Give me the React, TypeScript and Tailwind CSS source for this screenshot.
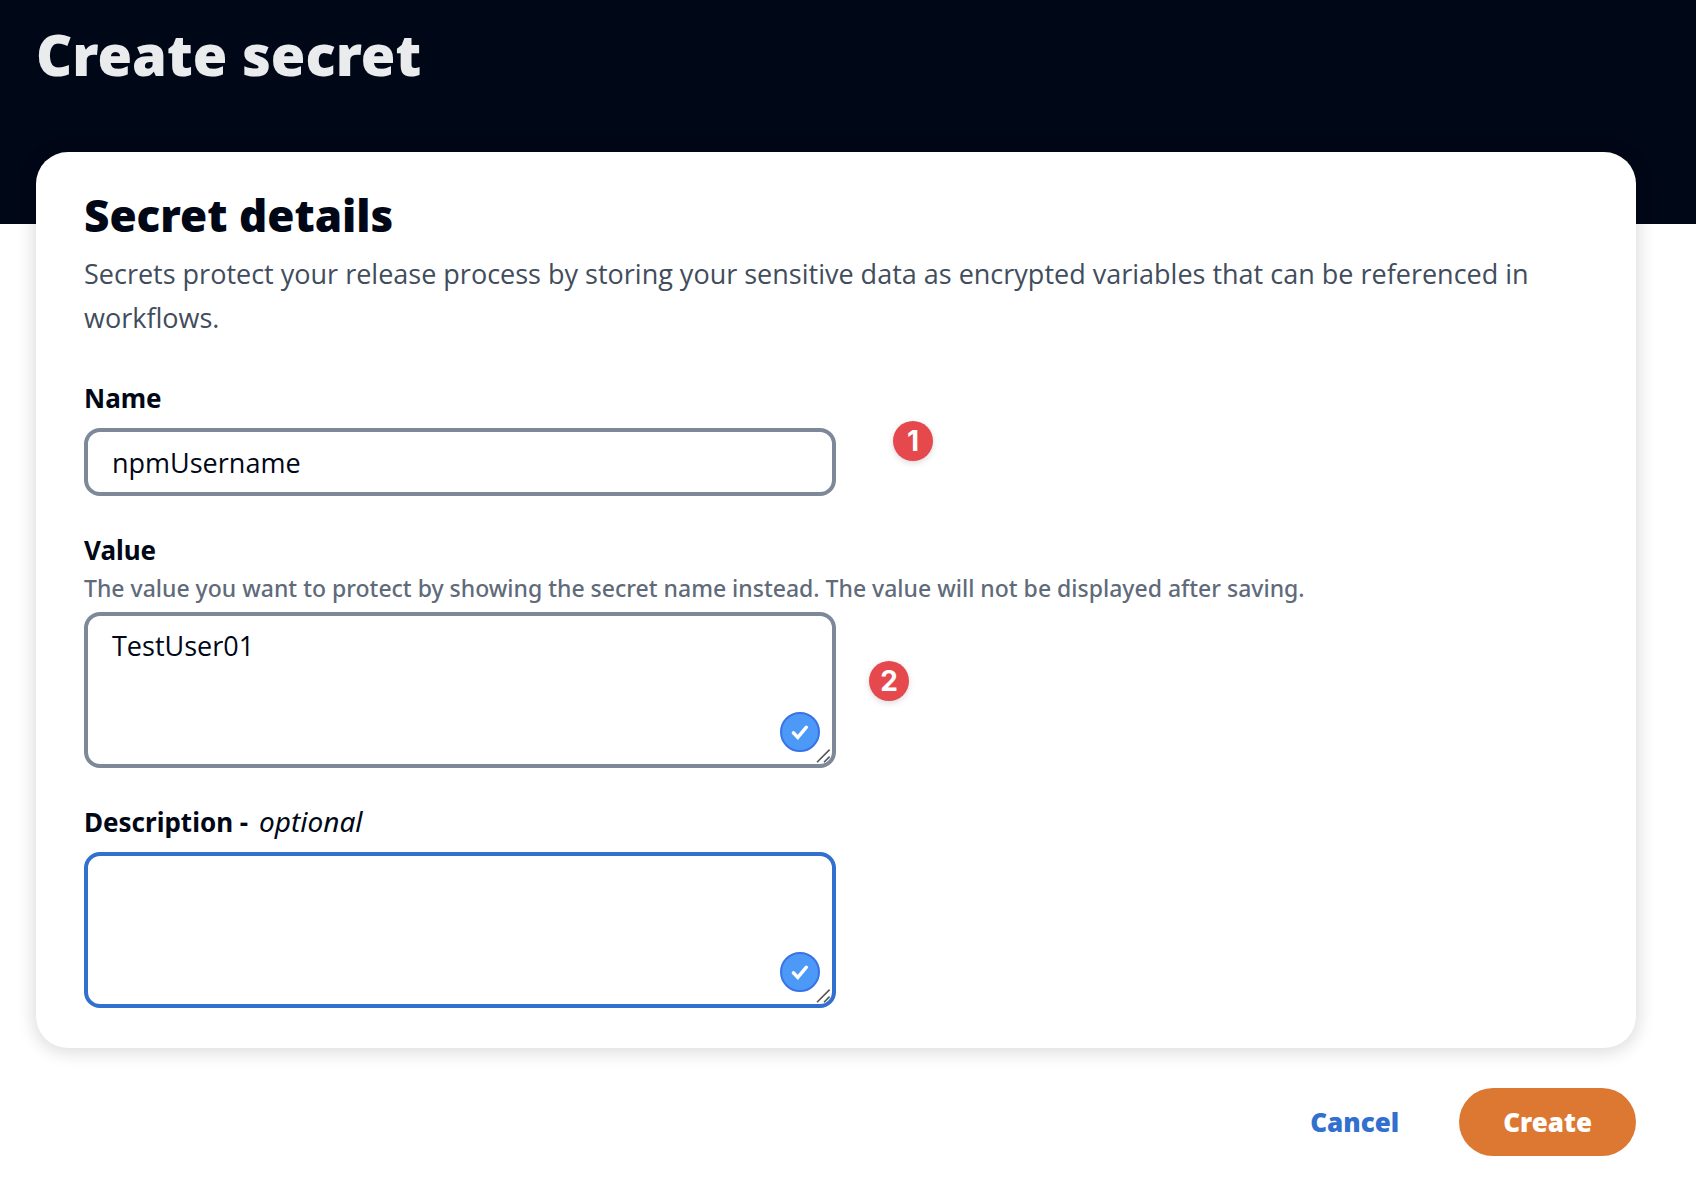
import React, { useState } from "react";

function CheckBubble() {
  return (
    <svg aria-hidden="true" viewBox="0 0 40 40" className="pointer-events-none absolute right-4 bottom-4 size-10">
      <circle cx="20" cy="20" r="19" fill="#4c99f8" stroke="#3873e8" strokeWidth="2" />
      <path d="M13.4 20.8 17.8 25.4 26.4 15.2" fill="none" stroke="#fff" strokeWidth="3.4" strokeLinecap="round" strokeLinejoin="miter" />
    </svg>
  );
}

function ResizeGrip() {
  return (
    <svg aria-hidden="true" viewBox="0 0 16 16" className="pointer-events-none absolute right-1 bottom-1 size-4">
      <path d="M1 14.2 13.6 1.6M8 14.2 13.6 8.6" fill="none" stroke="#555" strokeWidth="1.6" />
    </svg>
  );
}

const badge =
  "absolute flex size-10 items-center justify-center rounded-full bg-[#e5484d] font-['Inter',sans-serif] text-[28px] leading-10 font-bold text-white shadow-[0_2px_6px_rgba(0,0,0,0.15)]";
const label = "block text-[26px] leading-10 font-bold";
const field =
  "block w-full rounded-2xl border-4 bg-white px-6 font-['Open_Sans','Noto_Sans',sans-serif] text-[27px] leading-[44px] outline-none";

export default function App() {
  const [name, setName] = useState("npmUsername");
  const [value, setValue] = useState("TestUser01");
  const [description, setDescription] = useState("");

  return (
    <div className="min-h-screen bg-white font-['Noto_Sans',sans-serif] text-[#000716]">
      <header className="bg-[#000716] px-9 pt-4 pb-[132px]">
        <h1 className="text-[56px] leading-[76px] font-black text-[#e9ebed]">Create secret</h1>
      </header>

      <form className="-mt-[72px] mr-[60px] ml-9 pb-6" onSubmit={(e) => e.preventDefault()}>
        <section className="rounded-[32px] bg-white px-12 pt-9 pb-10 shadow-[0_2px_16px_4px_rgba(0,7,22,0.12)]">
          <h2 className="text-[44px] leading-[54px] font-black">Secret details</h2>
          <p className="mt-[10px] font-['Open_Sans','Noto_Sans',sans-serif] text-[27px] leading-[44px] text-[#414d5c]">
            Secrets protect your release process by storing your sensitive data as encrypted variables that can be
            referenced in workflows.
          </p>

          <div className="mt-[38px] flex flex-col gap-[34px]">
            <div>
              <label htmlFor="name" className={label}>
                Name
              </label>
              <div className="relative mt-[10px] max-w-[752px]">
                <input
                  id="name"
                  type="text"
                  value={name}
                  onChange={(e) => setName(e.target.value)}
                  className={`${field} h-[68px] border-[#7d8998]`}
                />
                <span className={`${badge} -top-[7px] left-[calc(100%+57px)]`}>1</span>
              </div>
            </div>

            <div>
              <label htmlFor="value" className={label}>
                Value
              </label>
              <p id="value-hint" className="mt-[2px] text-[23px] leading-8 font-medium text-[#5f6b7a]">
                The value you want to protect by showing the secret name instead. The value will not be displayed after
                saving.
              </p>
              <div className="relative mt-2 max-w-[752px]">
                <textarea
                  id="value"
                  aria-describedby="value-hint"
                  value={value}
                  onChange={(e) => setValue(e.target.value)}
                  className={`${field} h-[156px] resize-none border-[#7d8998] py-2`}
                />
                <CheckBubble />
                <ResizeGrip />
                <span className={`${badge} top-[49px] left-[calc(100%+33px)]`}>2</span>
              </div>
            </div>

            <div>
              <label htmlFor="description" className={label}>
                Description - <i className="ml-1 text-[28px] leading-8 font-normal">optional</i>
              </label>
              <div className="relative mt-[10px] max-w-[752px]">
                <textarea
                  id="description"
                  value={description}
                  onChange={(e) => setDescription(e.target.value)}
                  className={`${field} h-[156px] resize-none border-[#3170cf] py-2`}
                />
                <CheckBubble />
                <ResizeGrip />
              </div>
            </div>
          </div>
        </section>

        <div className="mt-10 flex items-center justify-end gap-4 text-[26px] leading-10 font-black">
          <button type="button" className="h-[68px] rounded-full px-11 text-[#3170cf]">
            Cancel
          </button>
          <button type="submit" className="h-[68px] rounded-full bg-[#dd7832] px-11 text-white">
            Create
          </button>
        </div>
      </form>
    </div>
  );
}
